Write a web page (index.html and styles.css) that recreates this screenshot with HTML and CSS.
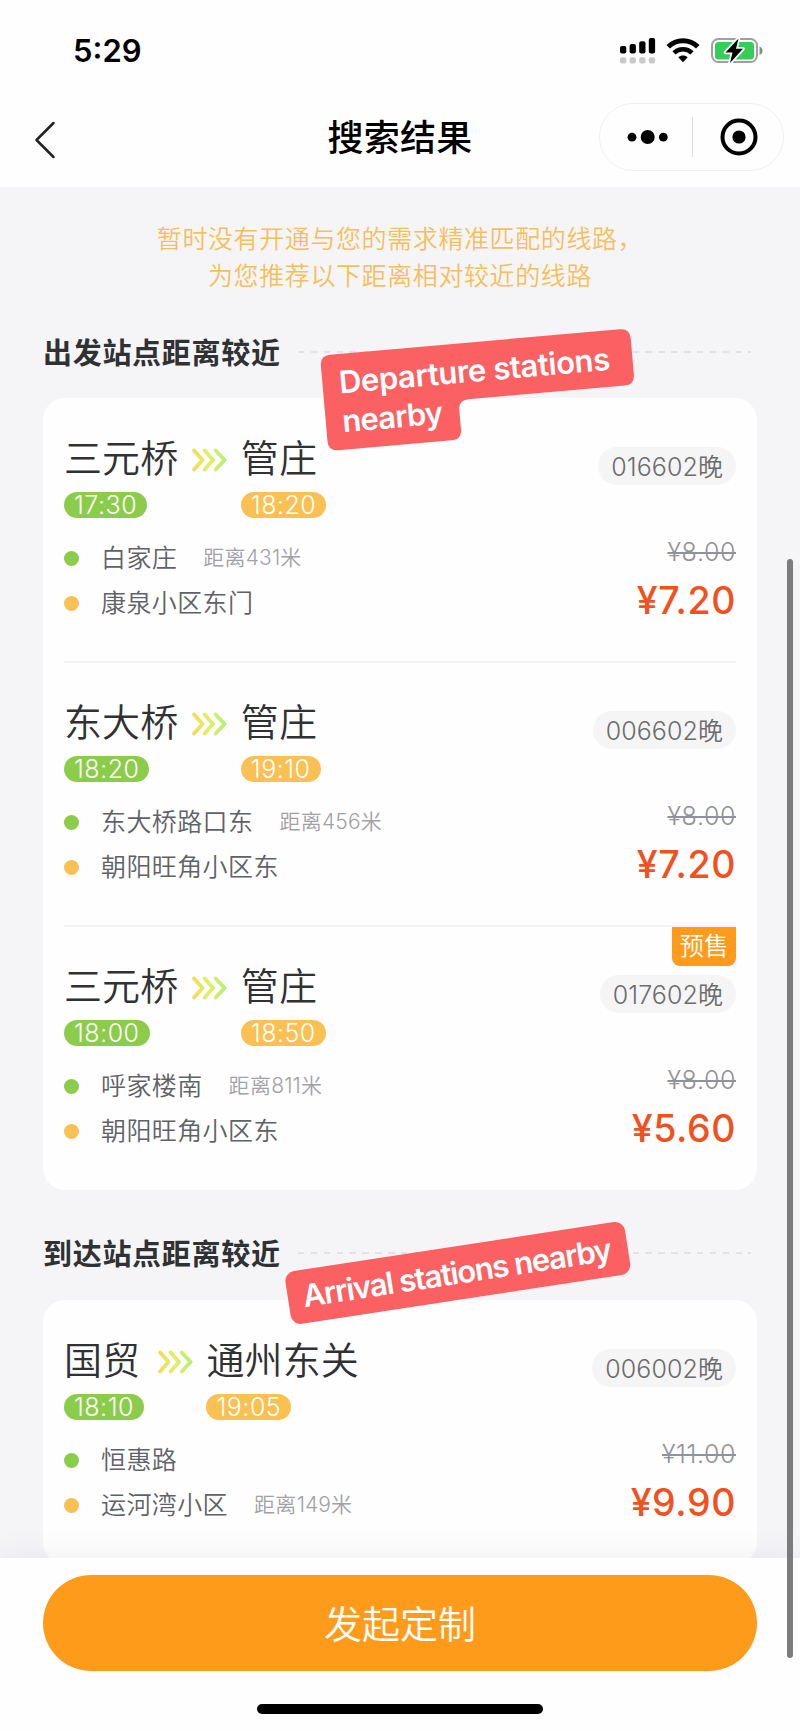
FILE: index.html
```html
<!DOCTYPE html>
<html lang="zh-CN">
<head>
<meta charset="utf-8">
<title>搜索结果</title>
<link rel="stylesheet" href="styles.css">
</head>
<body>
<svg class="defs" width="0" height="0" aria-hidden="true">
  <defs>
    <linearGradient id="arrowFade" gradientUnits="userSpaceOnUse" x1="0" y1="0" x2="35" y2="0">
      <stop offset="0" stop-color="#f9d758"/>
      <stop offset="0.5" stop-color="#dff06c"/>
      <stop offset="1" stop-color="#b2ef74"/>
    </linearGradient>
    <symbol id="arrows" viewBox="0 0 35 24">
      <path d="M2.200 2.500L10.500 12L2.200 21.500M12.700 2.500L21 12L12.700 21.500M23.700 2.500L32.500 12L23.700 21.500" fill="none" stroke="url(#arrowFade)" stroke-width="3.900" stroke-linecap="round" stroke-linejoin="round"/>
    </symbol>
  </defs>
</svg>
<div class="screen">
  <header class="header">
    <div class="status">
      <span class="clock">5:29</span>
      <div class="status-icons">
        <svg width="36" height="26" viewBox="0 0 36 26">
          <g fill="#000"><rect x="0" y="8" width="6.300" height="7.500" rx="2"/><rect x="9.600" y="6" width="6.300" height="9.500" rx="2"/><rect x="19.200" y="3.200" width="6.300" height="12.300" rx="2"/><rect x="28.800" y="0" width="6.300" height="15.500" rx="2"/></g>
          <g fill="#c9c9c9"><rect x="0" y="19.300" width="6.300" height="6.300" rx="2"/><rect x="9.600" y="19.300" width="6.300" height="6.300" rx="2"/><rect x="19.200" y="19.300" width="6.300" height="6.300" rx="2"/><rect x="28.800" y="19.300" width="6.300" height="6.300" rx="2"/></g>
        </svg>
        <svg class="wifi" width="34" height="26" viewBox="0 0 34 26">
          <path d="M2.200 8.800C10.500 .6 23.500 .6 31.800 8.800" fill="none" stroke="#000" stroke-width="5"/>
          <path d="M8 14.900C13 10 21 10 26 14.900" fill="none" stroke="#000" stroke-width="4.600"/>
          <path d="M12.300 19.200C15 17 19 17 21.700 19.200L17 24.300Z"/>
        </svg>
        <svg class="battery" width="53" height="28" viewBox="0 0 53 28">
          <rect x="1" y="2" width="45" height="23" rx="6.500" fill="#fff" stroke="#a0a0a0" stroke-width="2"/>
          <rect x="4" y="5" width="39" height="17.500" rx="3.500" fill="#34ce59"/>
          <path d="M48.500 9.500q3 1 3 4.200q0 3.200-3 4.200z" fill="#8a8a8a"/>
          <path d="M27.500 1.500L14.500 15.500H21.500L19 26L32 11.800H25Z" stroke="#fff" stroke-width="3.500" paint-order="stroke" fill="#000" stroke-linejoin="round"/>
        </svg>
      </div>
    </div>
    <div class="navbar">
      <svg class="back" width="22" height="40" viewBox="0 0 22 40"><path d="M19.500 3L2.500 20L19.500 37" fill="none" stroke="#222" stroke-width="2.500" stroke-linecap="round" stroke-linejoin="round"/></svg>
      <h1 class="title">搜索结果</h1>
      <div class="capsule">
        <svg class="more" width="42" height="16" viewBox="0 0 42 16"><circle cx="5" cy="8.200" r="4.400"/><circle cx="20.700" cy="8" r="7"/><circle cx="36.300" cy="8.200" r="4.400"/></svg>
        <span class="capsule-line"></span>
        <svg class="close" width="38" height="38" viewBox="0 0 38 38"><circle cx="19" cy="19" r="16.500" fill="none" stroke="#000" stroke-width="4"/><circle cx="19" cy="19" r="6.600"/></svg>
      </div>
    </div>
  </header>

  <main class="content">
    <p class="notice">暂时没有开通与您的需求精准匹配的线路，<br>为您推荐以下距离相对较近的线路</p>

    <section class="group">
      <div class="group-head"><h2>出发站点距离较近</h2><span class="dashes"></span></div>
      <div class="card">
        <article class="line">
          <div class="route">
            <div class="ends">
              <div class="end"><span class="station">三元桥</span><span class="time">17:30</span></div>
              <svg class="arrows"><use href="#arrows"/></svg>
              <div class="end"><span class="station">管庄</span><span class="time arrive">18:20</span></div>
            </div>
            <div class="stop"><i class="dot"></i><span>白家庄</span><small>距离<b>431</b>米</small></div>
            <div class="stop"><i class="dot arrive"></i><span>康泉小区东门</span></div>
          </div>
          <div class="fare"><span class="code"><b>016602</b>晚</span><s>¥8.00</s><strong>¥7.20</strong></div>
        </article>
        <article class="line">
          <div class="route">
            <div class="ends">
              <div class="end"><span class="station">东大桥</span><span class="time">18:20</span></div>
              <svg class="arrows"><use href="#arrows"/></svg>
              <div class="end"><span class="station">管庄</span><span class="time arrive">19:10</span></div>
            </div>
            <div class="stop"><i class="dot"></i><span>东大桥路口东</span><small>距离<b>456</b>米</small></div>
            <div class="stop"><i class="dot arrive"></i><span>朝阳旺角小区东</span></div>
          </div>
          <div class="fare"><span class="code"><b>006602</b>晚</span><s>¥8.00</s><strong>¥7.20</strong></div>
        </article>
        <article class="line">
          <span class="presale">预售</span>
          <div class="route">
            <div class="ends">
              <div class="end"><span class="station">三元桥</span><span class="time">18:00</span></div>
              <svg class="arrows"><use href="#arrows"/></svg>
              <div class="end"><span class="station">管庄</span><span class="time arrive">18:50</span></div>
            </div>
            <div class="stop"><i class="dot"></i><span>呼家楼南</span><small>距离<b>811</b>米</small></div>
            <div class="stop"><i class="dot arrive"></i><span>朝阳旺角小区东</span></div>
          </div>
          <div class="fare"><span class="code"><b>017602</b>晚</span><s>¥8.00</s><strong>¥5.60</strong></div>
        </article>
      </div>
      <svg class="sticker departure" width="330" height="140" viewBox="0 0 330 140">
        <g transform="translate(10 35.500) rotate(-5)">
          <path d="M10 0H301Q311 0 311 10V46.500Q311 56.500 301 56.500H144Q134 56.500 134 66.500V86Q134 96 124 96H10Q0 96 0 86V10Q0 0 10 0Z" fill="#fb6062"/>
          <text x="16.500" y="39.500" textLength="272">Departure stations</text>
          <text x="16.500" y="78.500" textLength="101">nearby</text>
        </g>
      </svg>
    </section>

    <section class="group">
      <div class="group-head"><h2>到达站点距离较近</h2><span class="dashes"></span></div>
      <div class="card">
        <article class="line">
          <div class="route">
            <div class="ends">
              <div class="end"><span class="station">国贸</span><span class="time">18:10</span></div>
              <svg class="arrows"><use href="#arrows"/></svg>
              <div class="end"><span class="station">通州东关</span><span class="time arrive">19:05</span></div>
            </div>
            <div class="stop"><i class="dot"></i><span>恒惠路</span></div>
            <div class="stop"><i class="dot arrive"></i><span>运河湾小区</span><small>距离<b>149</b>米</small></div>
          </div>
          <div class="fare"><span class="code"><b>006002</b>晚</span><s>¥11.00</s><strong>¥9.90</strong></div>
        </article>
      </div>
      <svg class="sticker arrival" width="370" height="120" viewBox="0 0 370 120">
        <g transform="translate(10 62.500) rotate(-8.700)">
          <rect width="343.500" height="53.500" rx="10" fill="#fb6062"/>
          <text x="15" y="37.500" textLength="312.500">Arrival stations nearby</text>
        </g>
      </svg>
    </section>
  </main>

  <footer class="footer">
    <button class="create">发起定制</button>
    <span class="home-bar"></span>
  </footer>
  <span class="scrollbar"></span>
</div>
</body>
</html>
```

FILE: styles.css
```css
* { box-sizing: border-box; }
body {
  margin: 0;
  font-family: "Noto Sans CJK SC", "Liberation Sans", sans-serif;
  font-weight: 350;
  background: #f5f5f8;
}
.defs { position: absolute; }
h1, h2, p { margin: 0; }
.screen {
  position: relative;
  display: flex;
  flex-direction: column;
  width: 800px;
  height: 1731px;
  overflow: hidden;
}

.header { height: 187px; flex: none; background: #fefefe; }
.status {
  display: flex;
  justify-content: space-between;
  height: 102px;
  padding: 32px 36px 0 73px;
}
.clock { font: 600 31px/38px Inter, sans-serif; }
.status-icons { display: flex; align-items: flex-start; padding-top: 6px; }
.wifi { margin-left: 10px; }
.battery { margin: -1px 0 0 11px; }
.navbar {
  display: grid;
  grid-template-columns: 1fr auto 1fr;
  align-items: center;
  height: 69px;
  padding: 0 16px 0 34px;
}
.back { margin-top: 7px; }
.title {
  font-size: 36px;
  font-weight: 500;
  line-height: 50px;
  letter-spacing: .3px;
  margin: -4px 0 0 -18px;
}
.capsule {
  justify-self: end;
  display: flex;
  align-items: center;
  width: 185px;
  height: 68px;
  border: 1.500px solid #f0f0f0;
  border-radius: 34px;
}
.more { margin-left: 27px; }
.capsule-line { width: 1px; height: 40px; margin-left: 23px; background: #dedede; }
.close { margin-left: 27px; }

.content {
  height: 1371px;
  flex: none;
  padding: 32px 0 0 43px;
  overflow: hidden;
}
.notice {
  width: 714px;
  color: #f6bf5c;
  font-size: 25px;
  line-height: 36.500px;
  letter-spacing: .6px;
  text-align: center;
}
.group { position: relative; width: 714px; }
.group-head {
  display: flex;
  align-items: center;
  height: 110px;
  padding: 16px 6px 0 1px;
}
.group:first-of-type .group-head { height: 106px; padding-top: 14px; }
.group-head h2 {
  color: #303133;
  font-size: 29px;
  font-weight: 700;
  line-height: 44px;
  letter-spacing: .7px;
  margin: -3px 0 0 -1px;
}
.dashes {
  flex: 1;
  height: 2px;
  margin-left: 17px;
  background: repeating-linear-gradient(90deg, #e2e2e4 0 6.500px, transparent 6.500px 12.870px);
}
.card { border-radius: 22px; background: #fefefe; }
.line {
  position: relative;
  display: flex;
  justify-content: space-between;
  height: 264px;
  margin: 0 21px;
}
.line + .line::before {
  content: "";
  position: absolute;
  top: -1px;
  left: 0;
  right: 0;
  height: 2px;
  background: #f4f4f5;
}
.ends { display: flex; padding-top: 33px; }
.end { display: flex; flex-direction: column; align-items: flex-start; }
.station {
  color: #303133;
  font-size: 38px;
  line-height: 50px;
  letter-spacing: .1px;
}
.arrows { width: 35px; height: 24px; margin: 17px 13.500px 0 14px; }
.time {
  height: 26px;
  margin-top: 11px;
  padding: 0 10px;
  border-radius: 13px;
  background: #8ccc4b;
  color: #fff;
  font: 300 25px/26px Inter, sans-serif;
  letter-spacing: .5px;
}
.time.arrive { background: #f9c053; }
.stop { display: flex; align-items: center; height: 45px; color: #606266; font-size: 25px; letter-spacing: .4px; }
.stop span, .stop small { margin-top: -3px; }
.ends + .stop { margin-top: 17px; }
.dot { width: 15px; height: 15px; margin: 1px 22px 0 0; border-radius: 50%; background: #8ccc4b; }
.dot.arrive { background: #f9c053; }
.stop small { margin-left: 26px; color: #a2a2a6; font-size: 21px; letter-spacing: .3px; }
.stop b, .code b { font-family: Inter, sans-serif; font-weight: 300; letter-spacing: .1px; }
.fare { display: flex; flex-direction: column; align-items: flex-end; padding-top: 49px; }
.code {
  height: 38px;
  padding: 0 13px;
  border-radius: 19px;
  background: #f5f5f5;
  color: #6c6c6e;
  font-size: 25px;
  line-height: 36px;
}
.fare s { margin-top: 50px; color: #909399; font: 300 25px/34px Inter, sans-serif; letter-spacing: .6px; }
.fare strong { margin-top: 8px; color: #f0511f; font: 500 37.500px/48px Inter, sans-serif; letter-spacing: .6px; }
.presale {
  position: absolute;
  top: 1px;
  right: 0;
  width: 64px;
  height: 39px;
  border-radius: 0 0 8px 8px;
  background: #ff9b1b;
  color: #fff;
  font-size: 24.500px;
  line-height: 36px;
  text-align: center;
}

.sticker { position: absolute; overflow: visible; }
.sticker text { fill: #fff; font: 600 31px Inter, sans-serif; }
.departure { left: 267px; top: 28px; }
.arrival { left: 231px; top: 20px; }

.footer {
  position: relative;
  flex: 1;
  display: flex;
  flex-direction: column;
  align-items: center;
  padding: 17px 43px 0;
  background: #fefefe;
  box-shadow: 0 -2px 28px rgba(60, 60, 100, .08);
}
.create {
  width: 100%;
  height: 96px;
  padding: 0 0 3px;
  border: 0;
  border-radius: 48px;
  background: #ff9b1b;
  color: #fff;
  font: 350 38px/50px "Noto Sans CJK SC", sans-serif;
}
.home-bar { width: 286px; height: 10px; margin-top: 33px; border-radius: 5px; background: #000; }
.scrollbar {
  position: absolute;
  right: 7px;
  top: 559px;
  width: 6px;
  height: 1099px;
  border-radius: 3px;
  background: #7c7c7d;
}
```
